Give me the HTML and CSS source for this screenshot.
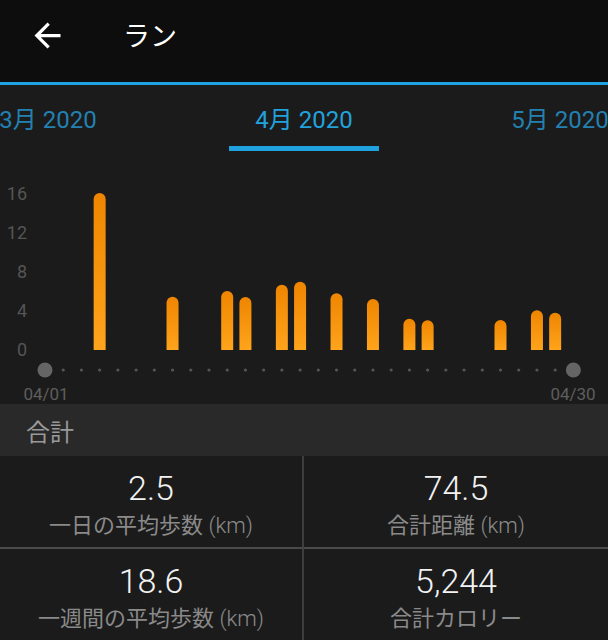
FILE: index.html
```html
<!DOCTYPE html>
<html>
  <head>
    <title>ラン</title>
    <link rel="stylesheet" href="styles.css">
  </head>
  <body>
    <header class="app-bar">
      <svg class="back-icon" viewBox="0 0 24 24" width="39" height="39">
        <path d="M20 11H7.83l5.59-5.59L12 4l-8 8 8 8 1.41-1.41L7.83 13H20v-2z" fill="#ffffff"/>
      </svg>
      <h1 class="app-title">ラン</h1>
    </header>

    <!-- Month tabs -->
    <nav class="month-tabs">
      <div class="tab"><span class="tab-label">3月 2020</span></div>
      <div class="tab tab-active"><span class="tab-label">4月 2020</span><div class="tab-indicator"></div></div>
      <div class="tab"><span class="tab-label">5月 2020</span></div>
    </nav>

    <!-- Daily distance chart -->
    <div class="chart">
      <svg id="chartSvg" width="608" height="252" viewBox="0 152 608 252">
        <defs>
          <linearGradient id="barFill" x1="0" y1="0" x2="0" y2="1">
            <stop offset="0" stop-color="#ef8500"/>
            <stop offset="1" stop-color="#ffa41c"/>
          </linearGradient>
        </defs>
        <g class="axis-labels">
          <text x="27" y="200">16</text>
          <text x="27" y="239">12</text>
          <text x="27" y="278">8</text>
          <text x="27" y="317">4</text>
          <text x="27" y="356">0</text>
        </g>
        <g id="bars"></g>
        <g id="dots"></g>
        <text class="date-label" x="46" y="400">04/01</text>
        <text class="date-label" x="573" y="400">04/30</text>
      </svg>
    </div>

    <div class="section-title">合計</div>

    <div class="stats">
      <div class="stat">
        <div class="stat-value">2.5</div>
        <div class="stat-label">一日の平均歩数 <span class="unit">(km)</span></div>
      </div>
      <div class="stat">
        <div class="stat-value">74.5</div>
        <div class="stat-label">合計距離 <span class="unit">(km)</span></div>
      </div>
      <div class="stat">
        <div class="stat-value">18.6</div>
        <div class="stat-label">一週間の平均歩数 <span class="unit">(km)</span></div>
      </div>
      <div class="stat">
        <div class="stat-value">5,244</div>
        <div class="stat-label">合計カロリー</div>
      </div>
    </div>

    <script>
      // day of month -> top of bar (px, baseline is 350)
      const runs = [
        [4, 193], [8, 296.7], [11, 291], [12, 297], [14, 284.7], [15, 281.7],
        [17, 293.3], [19, 299], [21, 318.7], [22, 320.3], [26, 320], [28, 310.3], [29, 312.7]
      ];
      const ns = "http://www.w3.org/2000/svg";
      const baseline = 350;
      const step = 18.22;

      function dayX(day) {
        return 45 + (day - 1) * step;
      }

      const bars = document.getElementById("bars");
      runs.forEach(function (run) {
        const left = dayX(run[0]) - 6;
        const top = run[1];
        const path = document.createElementNS(ns, "path");
        path.setAttribute("d", "M" + left + " " + baseline + "V" + (top + 6) +
          "A6 6 0 0 1 " + (left + 12) + " " + (top + 6) + "V" + baseline + "Z");
        path.setAttribute("fill", "url(#barFill)");
        bars.appendChild(path);
      });

      const dots = document.getElementById("dots");
      for (let day = 1; day <= 30; day++) {
        const dot = document.createElementNS(ns, "circle");
        const big = day === 1 || day === 30;
        dot.setAttribute("cx", dayX(day));
        dot.setAttribute("cy", 370);
        dot.setAttribute("r", big ? 7.5 : 1.6);
        dot.setAttribute("fill", big ? "#656565" : "#555555");
        dots.appendChild(dot);
      }
    </script>
  </body>
</html>
```

FILE: styles.css
```css
body {
  margin: 0;
  background-color: #1b1b1b;
  font-family: Roboto, "Noto Sans CJK JP", sans-serif;
  color: #ffffff;
  overflow: hidden;
}
.app-bar {
  height: 70px;
  padding: 0 0 12px 28px;
  display: flex;
  align-items: center;
  background-color: #0d0d0d;
  border-bottom: 3px solid #1fa2df;
}
.back-icon {
  display: block;
}
.app-title {
  margin: 5px 0 0 56px;
  font-size: 27px;
  font-weight: 400;
  line-height: 1;
}
.month-tabs {
  display: flex;
  justify-content: center;
  overflow: hidden;
}
.tab {
  flex: 0 0 256px;
  display: flex;
  flex-direction: column;
  align-items: center;
  padding-top: 20px;
  height: 47px;
}
.tab-label {
  font-size: 24px;
  line-height: 30px;
  color: #2381b1;
}
.tab-active .tab-label {
  color: #22a2dd;
}
.tab-indicator {
  width: 150px;
  height: 5px;
  margin-top: 11px;
  background-color: #1fa2df;
}
.chart {
  height: 252px;
}
.chart svg {
  display: block;
}
.axis-labels text {
  font-family: Roboto, sans-serif;
  font-size: 18px;
  fill: #555555;
  text-anchor: end;
}
.date-label {
  font-family: Roboto, sans-serif;
  font-size: 17px;
  fill: #5e5e5e;
  text-anchor: middle;
}
.section-title {
  height: 52px;
  padding-left: 26px;
  display: flex;
  align-items: center;
  background-color: #292929;
  color: #9a9a9a;
  font-size: 24px;
}
.stats {
  display: grid;
  grid-template-columns: 1fr 1fr;
}
.stat {
  height: 79px;
  padding-top: 12px;
  display: flex;
  flex-direction: column;
  align-items: center;
  border-bottom: 2px solid #4a4a4a;
}
.stat:nth-child(odd) {
  border-right: 2px solid #3e3e3e;
}
.stat-value {
  font-size: 34px;
  font-weight: 300;
  line-height: 40px;
  color: #f2f2f2;
}
.stat-label {
  margin-top: 3px;
  font-size: 22px;
  line-height: 30px;
  color: #8a8a8a;
}
.unit {
  font-weight: 300;
}
```
